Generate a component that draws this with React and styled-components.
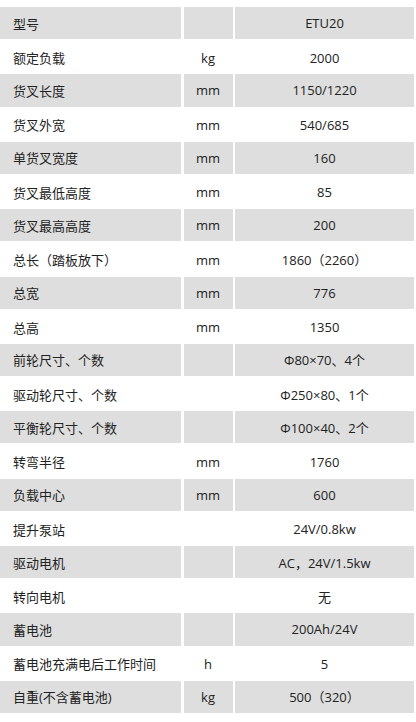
import React from "react";
import styled, { createGlobalStyle } from "styled-components";

const GlobalStyle = createGlobalStyle`
  html, body {
    margin: 0;
    padding: 0;
    background: #ffffff;
  }
  body {
    font-family: "Open Sans", "Noto Sans CJK SC", sans-serif;
    color: #222222;
  }
`;

const specs = [
  ["型号", "", "ETU20"],
  ["额定负载", "kg", "2000"],
  ["货叉长度", "mm", "1150/1220"],
  ["货叉外宽", "mm", "540/685"],
  ["单货叉宽度", "mm", "160"],
  ["货叉最低高度", "mm", "85"],
  ["货叉最高高度", "mm", "200"],
  ["总长（踏板放下）", "mm", "1860（2260）"],
  ["总宽", "mm", "776"],
  ["总高", "mm", "1350"],
  ["前轮尺寸、个数", "", "Φ80×70、4个"],
  ["驱动轮尺寸、个数", "", "Φ250×80、1个"],
  ["平衡轮尺寸、个数", "", "Φ100×40、2个"],
  ["转弯半径", "mm", "1760"],
  ["负载中心", "mm", "600"],
  ["提升泵站", "", "24V/0.8kw"],
  ["驱动电机", "", "AC，24V/1.5kw"],
  ["转向电机", "", "无"],
  ["蓄电池", "", "200Ah/24V"],
  ["蓄电池充满电后工作时间", "h", "5"],
  ["自重(不含蓄电池)", "kg", "500（320）"],
];

const Page = styled.div`
  padding: 7px 2px 0 0;
`;

const Table = styled.div`
  display: flex;
  flex-direction: column;
`;

const Row = styled.div`
  display: grid;
  grid-template-columns: 181px 49px 1fr;
  column-gap: 2.5px;
  height: 33.7px;
  box-sizing: border-box;
  padding: ${({ $shaded }) => ($shaded ? "0 0 1.5px 0" : "0")};
`;

const Cell = styled.div`
  display: flex;
  align-items: center;
  justify-content: ${({ $left }) => ($left ? "flex-start" : "center")};
  padding-left: ${({ $left }) => ($left ? "13px" : "0")};
  background: ${({ $shaded }) => ($shaded ? "#dedede" : "transparent")};
  font-size: 13px;
  white-space: nowrap;
`;

export default function App() {
  return (
    <>
      <GlobalStyle />
      <Page>
        <Table>
          {specs.map(([name, unit, value], i) => {
            const shaded = i % 2 === 0;
            return (
              <Row key={i} $shaded={shaded}>
                <Cell $left $shaded={shaded}>{name}</Cell>
                <Cell $shaded={shaded}>{unit}</Cell>
                <Cell $shaded={shaded}>{value}</Cell>
              </Row>
            );
          })}
        </Table>
      </Page>
    </>
  );
}
